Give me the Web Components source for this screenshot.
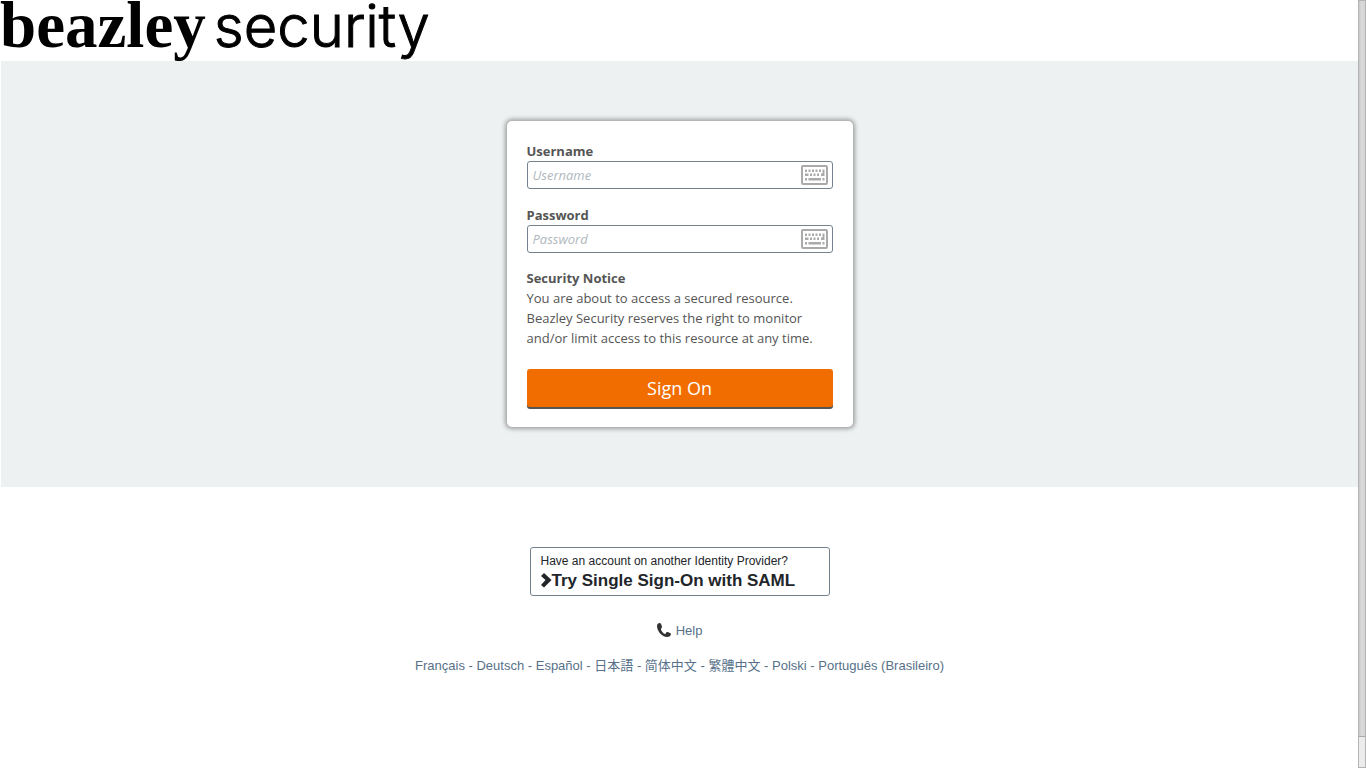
<!DOCTYPE html>
<html lang="en">
<head>
<meta charset="utf-8">
<title>Sign On</title>
<style>
  html, body {
    height: 100%;
    margin: 0;
  }
  body {
    background: #fff;
    font: 13px/20px "Liberation Sans", Arial, "Noto Sans CJK JP", sans-serif;
  }
</style>
</head>
<body>
<sign-on-page></sign-on-page>

<script>
function define(name, html) {
  const template = document.createElement('template');
  template.innerHTML = html;
  customElements.define(name, class extends HTMLElement {
    constructor() {
      super();
      this.attachShadow({ mode: 'open' });
      this.shadowRoot.appendChild(template.content.cloneNode(true));
    }
  });
}

define('brand-logo', `
  <style>
    :host {
      display: flex;
      align-items: baseline;
      gap: 8px;
      height: 60px;
      color: #000;
      line-height: 50px;
      white-space: nowrap;
    }
    .serif {
      font-family: "Liberation Serif", "Times New Roman", serif;
      font-size: 65px;
      font-weight: bold;
    }
    .sans {
      font-family: Inter, "Liberation Sans", sans-serif;
      font-size: 58px;
      font-weight: 300;
      -webkit-text-stroke: 1px #000;
    }
  </style>
  <span class="serif">beazley</span>
  <span class="sans">security</span>
`);

define('keyboard-icon', `
  <style>
    :host { display: block; }
    svg { display: block; }
  </style>
  <svg width="27" height="20" viewBox="0 0 54 40" fill="#aaa" aria-hidden="true">
    <rect x="2" y="2" width="50" height="36" rx="2" fill="none" stroke="#aaa" stroke-width="4"/>
    <path d="M8 9h4v5H8zM15 9h4v5h-4zM22 9h4v5h-4zM29 9h4v5h-4zM36 9h4v5h-4zM43 9h4v13h-7v-5h3z"/>
    <path d="M8 17h7v5H8zM18 17h4v5h-4zM25 17h4v5h-4zM32 17h4v5h-4z"/>
    <path d="M8 26h4v5H8zM15 26h25v5H15zM43 26h4v5h-4z"/>
  </svg>
`);

class TextField extends HTMLElement {
  constructor() {
    super();
    this.attachShadow({ mode: 'open' });
    this.shadowRoot.innerHTML = `
      <style>
        :host { display: block; }
        label {
          display: block;
          font-weight: bold;
        }
        .box {
          display: flex;
          align-items: center;
          box-sizing: border-box;
          height: 28px;
          padding: 0 4px 0 5px;
          border: 1px solid #75828f;
          border-radius: 3px;
          background: #fff;
        }
        input {
          flex: 1;
          min-width: 0;
          padding: 0;
          border: 0;
          outline: 0;
          background: none;
          color: #555;
          font: 13px/20px "Open Sans", sans-serif;
        }
        input::placeholder {
          color: #b0b8bd;
          font-style: italic;
          opacity: 1;
        }
      </style>
      <label for="field"></label>
      <div class="box">
        <input id="field">
        <keyboard-icon></keyboard-icon>
      </div>
    `;
  }

  connectedCallback() {
    const label = this.getAttribute('label');
    const $input = this.shadowRoot.querySelector('input');
    this.shadowRoot.querySelector('label').textContent = label;
    $input.placeholder = label;
    $input.type = this.getAttribute('type') || 'text';
  }
}
customElements.define('text-field', TextField);

define('login-card', `
  <style>
    :host {
      display: block;
      box-sizing: border-box;
      width: 100%;
      max-width: 346px;
      padding: 20px;
      border-radius: 5px;
      background: #fff;
      box-shadow: 0 0 4px 2px #a0a0a0;
      color: #555;
      font-family: "Open Sans", sans-serif;
    }
    form {
      display: flex;
      flex-direction: column;
      gap: 16px;
    }
    .notice {
      margin-bottom: 5px;
    }
    .notice h2, .notice p {
      margin: 0;
      font-size: 13px;
    }
    .notice h2 {
      line-height: 19px;
    }
    button {
      height: 38px;
      padding: 0;
      border: 0;
      border-radius: 3px;
      background: #f26d00;
      box-shadow: 0 2px 0 #555;
      color: #fff;
      font: 18px/38px "Open Sans", sans-serif;
      cursor: pointer;
    }
  </style>
  <form>
    <text-field label="Username"></text-field>
    <text-field label="Password" type="password"></text-field>
    <div class="notice">
      <h2>Security Notice</h2>
      <p>You are about to access a secured resource. Beazley Security reserves the right to monitor and/or limit access to this resource at any time.</p>
    </div>
    <button type="button">Sign On</button>
  </form>
`);

define('saml-link', `
  <style>
    :host {
      display: block;
      width: 100%;
      max-width: 300px;
    }
    a {
      display: block;
      padding: 4px 10px;
      border: 1px solid #75828f;
      border-radius: 3px;
      box-sizing: border-box;
      color: #222529;
      font-size: 12px;
      line-height: 18px;
      text-decoration: none;
    }
    strong {
      display: flex;
      align-items: center;
      font-size: 17px;
      line-height: 21px;
      white-space: nowrap;
    }
  </style>
  <a href="#saml">
    <span>Have an account on another Identity Provider?</span>
    <strong>
      <svg width="11" height="16" viewBox="0 0 11 16" aria-hidden="true">
        <path d="M0 3l3-3 7.500 7L3 14.500 0 12l4.500-5z" fill="#222529"/>
      </svg>
      Try Single Sign-On with SAML
    </strong>
  </a>
`);

define('help-link', `
  <style>
    :host {
      display: flex;
      align-items: center;
      gap: 5px;
    }
    a {
      color: #57718a;
      text-decoration: none;
    }
  </style>
  <svg width="14" height="16" viewBox="0 0 14 16" aria-hidden="true">
    <path d="M3 0C1 0 0 1 0 3c0 5 5 11 10 11 2 0 4-1 4-3 0-1-3-2-4-2s-1 2-2 2C7 11 4 8 4 6c0-1 1-1 1-2S4 0 3 0z" fill="#333"/>
  </svg>
  <a href="#help">Help</a>
`);

define('language-list', `
  <style>
    :host {
      display: block;
      color: #57718a;
      text-align: center;
    }
    a {
      color: inherit;
      text-decoration: none;
    }
    [lang="zh-CN"] { font-family: "Liberation Sans", "Noto Sans CJK SC", sans-serif; }
    [lang="zh-TW"] { font-family: "Liberation Sans", "Noto Sans CJK TC", sans-serif; }
  </style>
  <a href="#fr" lang="fr">Français</a> -
  <a href="#de" lang="de">Deutsch</a> -
  <a href="#es" lang="es">Español</a> -
  <a href="#ja" lang="ja">日本語</a> -
  <a href="#zh-CN" lang="zh-CN">简体中文</a> -
  <a href="#zh-TW" lang="zh-TW">繁體中文</a> -
  <a href="#pl" lang="pl">Polski</a> -
  <a href="#pt-BR" lang="pt-BR">Português (Brasileiro)</a>
`);

define('scroll-rail', `
  <style>
    :host {
      display: flex;
      flex-direction: column;
      width: 8px;
      box-sizing: border-box;
      border: 1px solid #b4b4b4;
      background: #ececec;
    }
    .thumb {
      height: 96%;
      border-bottom: 1px solid #a8a8a8;
      background: linear-gradient(to right, #c6c6c6, #dadada 40%, #d4d4d4);
    }
  </style>
  <div class="thumb"></div>
`);

define('sign-on-page', `
  <style>
    :host {
      display: flex;
      min-height: 100%;
    }
    .page {
      flex: 1;
      min-width: 0;
    }
    main, footer {
      display: flex;
      margin-left: 1px;
      padding: 60px 0;
    }
    main {
      justify-content: center;
      margin-top: 1px;
      background: #edf1f2;
    }
    footer {
      flex-direction: column;
      align-items: center;
    }
    help-link { margin: 25px 0 15px; }
  </style>
  <div class="page">
    <header><brand-logo></brand-logo></header>
    <main><login-card></login-card></main>
    <footer>
      <saml-link></saml-link>
      <help-link></help-link>
      <language-list></language-list>
    </footer>
  </div>
  <scroll-rail></scroll-rail>
`);
</script>
</body>
</html>
